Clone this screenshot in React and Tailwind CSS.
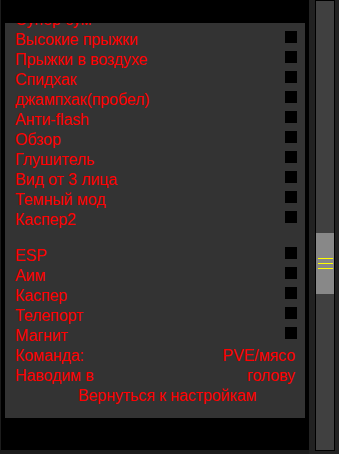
import React from "react";

const topItems = [
  "Высокие прыжки",
  "Прыжки в воздухе",
  "Спидхак",
  "джампхак(пробел)",
  "Анти-flash",
  "Обзор",
  "Глушитель",
  "Вид от 3 лица",
  "Темный мод",
  "Каспер2",
];

const cheatItems = ["ESP", "Аим", "Каспер", "Телепорт", "Магнит"];

function Row({ label, box = true }) {
  return (
    <div className="flex h-[20px] items-start justify-between leading-[20px]">
      <span>{label}</span>
      {box && <span className="mt-[1px] h-[12px] w-[12px] bg-black" />}
    </div>
  );
}

function Pair({ left, right }) {
  return (
    <div className="flex h-[20px] justify-between pr-[2px] leading-[20px]">
      <span>{left}</span>
      <span>{right}</span>
    </div>
  );
}

export default function App() {
  return (
    <div className="flex h-[454px] w-[339px] overflow-hidden bg-black">
      {/* main area */}
      <div className="w-[309px] border-b-4 border-l border-[#1c1c1c] bg-black">
        <div
          className="ml-[4px] mt-[23px] h-[395px] w-[300px] overflow-hidden bg-[#333333] text-[16px] tracking-[-0.1px] text-[#ff0000]"
          style={{ fontFamily: '"Liberation Sans", Arial, sans-serif' }}
        >
          <div className="-mt-[13px] pl-[10px] pr-[8px]">
            <Row label="Супер-зум" />
            {topItems.map((t) => (
              <Row key={t} label={t} />
            ))}
            <div className="h-[16px]" />
            {cheatItems.map((t) => (
              <Row key={t} label={t} />
            ))}
            <Pair left="Команда:" right="PVE/мясо" />
            <Pair left="Наводим в" right="голову" />
            <div className="h-[20px] pl-[63px] leading-[20px]">Вернуться к настройкам</div>
          </div>
        </div>
      </div>

      {/* scrollbar */}
      <div className="flex w-[30px] bg-[#222222]">
        <div className="relative ml-[6px] h-[451px] w-[20px] border border-black bg-[#404040]">
          <div className="absolute left-0 right-0 top-[232px] flex h-[61px] flex-col items-center justify-center gap-[4px] bg-[#888888]">
            <span className="h-px w-[15px] bg-[#ffff00]" />
            <span className="h-px w-[15px] bg-[#ffff00]" />
            <span className="h-px w-[15px] bg-[#ffff00]" />
          </div>
        </div>
      </div>
    </div>
  );
}
